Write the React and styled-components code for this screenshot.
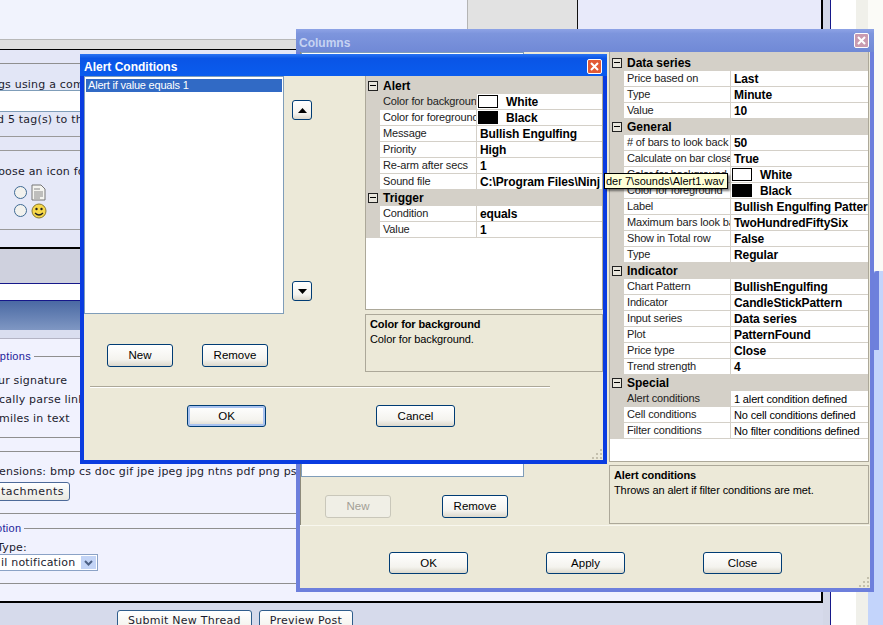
import React from "react"
import styled, { createGlobalStyle } from "styled-components"

const GlobalStyle = createGlobalStyle`
  html, body { margin: 0; padding: 0; overflow: hidden; background: #f1f3fd; }
`

const alertSections = [
  {
    title: "Alert",
    rows: [
      { name: "Color for background", value: "White", swatch: "#fff", selected: true },
      { name: "Color for foreground", value: "Black", swatch: "#000" },
      { name: "Message", value: "Bullish Engulfing" },
      { name: "Priority", value: "High" },
      { name: "Re-arm after secs", value: "1" },
      { name: "Sound file", value: "C:\\Program Files\\Ninj" },
    ],
  },
  {
    title: "Trigger",
    rows: [
      { name: "Condition", value: "equals" },
      { name: "Value", value: "1" },
    ],
  },
]

const columnSections = [
  {
    title: "Data series",
    rows: [
      { name: "Price based on", value: "Last" },
      { name: "Type", value: "Minute" },
      { name: "Value", value: "10" },
    ],
  },
  {
    title: "General",
    rows: [
      { name: "# of bars to look back", value: "50" },
      { name: "Calculate on bar close", value: "True" },
      { name: "Color for background", value: "White", swatch: "#fff" },
      { name: "Color for foreground", value: "Black", swatch: "#000" },
      { name: "Label", value: "Bullish Engulfing Pattern" },
      { name: "Maximum bars look back", value: "TwoHundredFiftySix" },
      { name: "Show in Total row", value: "False" },
      { name: "Type", value: "Regular" },
    ],
  },
  {
    title: "Indicator",
    rows: [
      { name: "Chart Pattern", value: "BullishEngulfing" },
      { name: "Indicator", value: "CandleStickPattern" },
      { name: "Input series", value: "Data series" },
      { name: "Plot", value: "PatternFound" },
      { name: "Price type", value: "Close" },
      { name: "Trend strength", value: "4" },
    ],
  },
  {
    title: "Special",
    rows: [
      { name: "Alert conditions", value: "1 alert condition defined", plain: true, selected: true },
      { name: "Cell conditions", value: "No cell conditions defined", plain: true },
      { name: "Filter conditions", value: "No filter conditions defined", plain: true },
    ],
  },
]

const PropertyGrid = ({ sections, nameWidth, height, leadHeight }) => (
  <GridBox $height={height}>
    {sections.map((section, i) => (
      <div key={section.title}>
        <CategoryRow $height={i === 0 ? leadHeight : 16}>
          <Toggle />
          {section.title}
        </CategoryRow>
        {section.rows.map(row => (
          <PropRow key={row.name} $nameWidth={nameWidth}>
            <PropName $selected={row.selected}>{row.name}</PropName>
            <PropValue $plain={row.plain}>
              {row.swatch && <Swatch $color={row.swatch} />}
              {row.value}
            </PropValue>
          </PropRow>
        ))}
      </div>
    ))}
  </GridBox>
)

const Grip = () => (
  <GripIcon width="12" height="12" viewBox="0 0 12 12">
    {[[9, 1], [5, 5], [9, 5], [1, 9], [5, 9], [9, 9]].map(([x, y]) => (
      <rect key={x + "-" + y} x={x} y={y} width="2" height="2" fill="#c4c0ad" />
    ))}
  </GripIcon>
)

const CloseGlyph = () => (
  <svg width="9" height="9" viewBox="0 0 9 9">
    <path d="M1 1 L8 8 M8 1 L1 8" stroke="#fff" strokeWidth="2" />
  </svg>
)

const Arrow = ({ up }) => (
  <svg width="9" height="5" viewBox="0 0 9 5">
    <path d={up ? "M4.5 0 L9 5 L0 5 Z" : "M0 0 L9 0 L4.5 5 Z"} fill="#000" />
  </svg>
)

const DocIcon = () => (
  <svg width="15" height="17" viewBox="0 0 15 17">
    <path d="M1 1 H10 L14 5 V16 H1 Z" fill="#f4f4f0" stroke="#777" />
    <path d="M3 5 H9 M3 8 H12 M3 10 H12 M3 12 H12 M3 14 H9" stroke="#888" />
  </svg>
)

const SmileIcon = () => (
  <svg width="16" height="16" viewBox="0 0 16 16">
    <circle cx="8" cy="8" r="7" fill="#f7d84a" stroke="#8a7a30" />
    <circle cx="5.5" cy="6" r="1.2" fill="#222" />
    <circle cx="10.5" cy="6" r="1.2" fill="#222" />
    <path d="M4 10 Q8 14 12 10" fill="none" stroke="#222" strokeWidth="1.2" />
  </svg>
)

const App = () => (
  <Page>
    <GlobalStyle />
    <Forum>
      <Sheet>
        <TopRow>
          <TopLeft>
            <TopBand />
          </TopLeft>
          <TopMiddle />
          <TopRight />
        </TopRow>
        <Band $height={14} $line="#8f8f8f" />
        <TextRow $height={26} $pad={14} $indent={-9} $bg="#e2e6f6">ags using a comma to separate them</TextRow>
        <InputRow />
        <TextRow $height={25} $pad={1} $indent={-3} $bg="#e2e6f6" $line="#9a9a9a">d 5 tag(s) to this thread</TextRow>
        <Band $height={14} $line="#9a9a9a" />
        <IconPanel>
          <TextLine $indent={-9}>hoose an icon for your thread</TextLine>
          <IconChoices>
            <Choice>
              <Radio />
              <DocIcon />
            </Choice>
            <Choice>
              <Radio />
              <SmileIcon />
            </Choice>
          </IconChoices>
        </IconPanel>
        <Band $height={17} />
        <Band $height={2} $bg="#000" />
        <Band $height={35} $bg="#cfd1de" $line="#16188a" />
        <Band $height={17} $bg="#fff" $line="#16188a" />
        <HeaderBand />
        <Band $height={9} $bg="#dadeef" $line="#b4b4c4" />
        <OptionsPanel>
          <Legend $indent={-9}>Options</Legend>
          <OptionLine $indent={-2}>ur signature</OptionLine>
          <OptionLine $indent={-1}>cally parse links</OptionLine>
          <OptionLine $indent={-1}>miles in text</OptionLine>
        </OptionsPanel>
        <Band $height={14} $bg="#f1f2fe" $line="#8f8f8f" />
        <AttachPanel>
          <TextLine $indent={-1}>ensions: bmp cs doc gif jpe jpeg jpg ntns pdf png psd</TextLine>
          <AttachButton>tachments</AttachButton>
        </AttachPanel>
        <SubscribePanel>
          <Legend $indent={-4}>otion</Legend>
          <TypeLabel>Type:</TypeLabel>
          <FakeSelect>
            il notification
            <SelectArrow>
              <svg width="9" height="6" viewBox="0 0 9 6">
                <path d="M1 1 L4.5 4.5 L8 1" fill="none" stroke="#4d6185" strokeWidth="2" />
              </svg>
            </SelectArrow>
          </FakeSelect>
        </SubscribePanel>
        <SheetGap />
      </Sheet>
      <SubmitRow>
        <ForumButton>Submit New Thread</ForumButton>
        <ForumButton>Preview Post</ForumButton>
      </SubmitRow>
    </Forum>
    <StripDim />
    <StripWhite />
    <StripPale />
    <Scrollbar>
      <ScrollTrackTop />
      <ScrollThumb />
    </Scrollbar>

    <ColumnsWindow>
      <TitleBar $faded>
        Columns
        <CloseButton $faded>
          <CloseGlyph />
        </CloseButton>
      </TitleBar>
      <ColumnsBody>
        <ColumnsLeft>
          <ColumnsList />
          <ButtonPair $gap={51} $left={24}>
            <SmallButton disabled>New</SmallButton>
            <SmallButton>Remove</SmallButton>
          </ButtonPair>
        </ColumnsLeft>
        <ColumnsRight>
          <PropertyGrid sections={columnSections} nameWidth={107} height={410} leadHeight={19} />
          <HelpBox $height={59}>
            <strong>Alert conditions</strong>
            Throws an alert if filter conditions are met.
          </HelpBox>
        </ColumnsRight>
      </ColumnsBody>
      <ColumnsFooter>
        <WideButton>OK</WideButton>
        <WideButton>Apply</WideButton>
        <WideButton>Close</WideButton>
      </ColumnsFooter>
      <Grip />
    </ColumnsWindow>

    <AlertWindow>
      <TitleBar>
        Alert Conditions
        <CloseButton>
          <CloseGlyph />
        </CloseButton>
      </TitleBar>
      <AlertBody>
        <AlertLeft>
          <AlertList>
            <ListItem>Alert if value equals 1</ListItem>
          </AlertList>
          <ButtonPair $gap={29} $left={23}>
            <SmallButton>New</SmallButton>
            <SmallButton>Remove</SmallButton>
          </ButtonPair>
        </AlertLeft>
        <ArrowColumn>
          <ArrowButton>
            <Arrow up />
          </ArrowButton>
          <ArrowButton>
            <Arrow />
          </ArrowButton>
        </ArrowColumn>
        <AlertRight>
          <PropertyGrid sections={alertSections} nameWidth={97} height={234} leadHeight={18} />
          <HelpBox $height={58}>
            <strong>Color for background</strong>
            Color for background.
          </HelpBox>
        </AlertRight>
      </AlertBody>
      <Separator />
      <AlertFooter>
        <WideButton $default>OK</WideButton>
        <WideButton>Cancel</WideButton>
      </AlertFooter>
      <Grip />
    </AlertWindow>

    <Tooltip>der 7\sounds\Alert1.wav</Tooltip>
  </Page>
)

export default App

const uiFont = `"Liberation Sans", Arial, sans-serif`
const forumFont = `"DejaVu Sans", Verdana, sans-serif`

const Page = styled.div`
  position: relative;
  width: 883px;
  height: 625px;
  overflow: hidden;
  display: flex;
  background: #f1f3fd;
`

const Forum = styled.div`
  width: 823px;
  flex: none;
  display: flex;
  flex-direction: column;
  overflow: hidden;
  font: 11px ${forumFont};
  letter-spacing: 0.2px;
  color: #1c1c2e;
`

const Sheet = styled.div`
  flex: none;
  height: 601px;
  display: flex;
  flex-direction: column;
  overflow: hidden;
  border-right: 2px solid #000;
`

const SheetGap = styled.div`
  flex: 1;
  background: #f1f2fe;
`

const TopRow = styled.div`
  display: flex;
  height: 50px;
  flex: none;
`

const TopLeft = styled.div`
  width: 467px;
  display: flex;
  flex-direction: column;
  justify-content: flex-end;
  background: #f1f3fd;
`

const TopBand = styled.div`
  height: 9px;
  background: #dedede;
  border-top: 1px solid #b8b8b8;
  border-bottom: 1px solid #000;
`

const TopMiddle = styled.div`
  width: 109px;
  background: #e2e2e2;
  border-left: 1px solid #b4b4b4;
  border-right: 1px solid #111;
`

const TopRight = styled.div`
  flex: 1;
  background: #e8eafa;
`

const Band = styled.div`
  flex: none;
  height: ${p => p.$height}px;
  background: ${p => p.$bg || "#e4e7f7"};
  border-bottom: ${p => (p.$line ? `1px solid ${p.$line}` : "none")};
  box-sizing: border-box;
`

const TextRow = styled.div`
  flex: none;
  box-sizing: border-box;
  height: ${p => p.$height}px;
  padding-top: ${p => p.$pad}px;
  text-indent: ${p => p.$indent}px;
  white-space: nowrap;
  overflow: hidden;
  background: ${p => p.$bg};
  border-bottom: ${p => (p.$line ? `1px solid ${p.$line}` : "none")};
  line-height: 14px;
`

const InputRow = styled.div`
  flex: none;
  height: 20px;
  background: #fff;
  border-top: 1px solid #7f9db9;
  border-bottom: 1px solid #7f9db9;
`

const IconPanel = styled.div`
  flex: none;
  box-sizing: border-box;
  height: 79px;
  padding-top: 14px;
  background: #e6e9f8;
  border-bottom: 1px solid #9a9a9a;
`

const TextLine = styled.div`
  margin-left: ${p => p.$indent}px;
  white-space: nowrap;
  line-height: 14px;
`

const IconChoices = styled.div`
  margin: 5px 0 0 14px;
  display: flex;
  flex-direction: column;
  gap: 1px;
`

const Choice = styled.div`
  display: flex;
  align-items: center;
  gap: 4px;
  height: 17px;
`

const Radio = styled.span`
  width: 11px;
  height: 11px;
  border: 1px solid #3f6a94;
  border-radius: 50%;
  background: #f2f2ee;
`

const HeaderBand = styled.div`
  flex: none;
  height: 29px;
  background: linear-gradient(#4a69a3, #7f97c3);
`

const OptionsPanel = styled.div`
  flex: none;
  box-sizing: border-box;
  height: 99px;
  padding-top: 10px;
  background: #f1f2fe;
  border-bottom: 1px solid #8f8f8f;
`

const Legend = styled.div`
  display: flex;
  align-items: center;
  gap: 3px;
  margin-left: ${p => p.$indent}px;
  height: 14px;
  color: #22229a;
  font: 11px ${uiFont};
  letter-spacing: 0.3px;
  &::after {
    content: "";
    flex: 1;
    height: 1px;
    background: #8f8f8f;
  }
`

const OptionLine = styled.div`
  margin-left: ${p => p.$indent}px;
  white-space: nowrap;
  line-height: 19px;
  ${Legend} + & {
    margin-top: 8px;
  }
`

const AttachPanel = styled.div`
  flex: none;
  box-sizing: border-box;
  height: 62px;
  padding-top: 13px;
  background: #f1f2fe;
  border-bottom: 1px solid #8f8f8f;
`

const AttachButton = styled.div`
  box-sizing: border-box;
  width: 87px;
  height: 19px;
  margin: 3px 0 0 -17px;
  padding-left: 17px;
  line-height: 17px;
  letter-spacing: 0.5px;
  border: 1px solid #4d6a99;
  border-radius: 3px;
  background: linear-gradient(#fff, #e9e8e0);
`

const SubscribePanel = styled.div`
  flex: none;
  box-sizing: border-box;
  height: 70px;
  padding-top: 7px;
  background: #f1f2fe;
  border-bottom: 1px solid #8f8f8f;
`

const TypeLabel = styled.div`
  margin: 6px 0 0 -3px;
  line-height: 14px;
`

const FakeSelect = styled.div`
  box-sizing: border-box;
  display: flex;
  align-items: center;
  justify-content: space-between;
  width: 114px;
  height: 17px;
  margin: -1px 0 0 -16px;
  padding-left: 16px;
  background: #fff;
  border: 1px solid #8ba2c6;
  white-space: nowrap;
`

const SelectArrow = styled.span`
  display: flex;
  align-items: center;
  justify-content: center;
  width: 15px;
  height: 13px;
  margin-right: 1px;
  background: #c3d4f6;
`

const SubmitRow = styled.div`
  flex: 1;
  padding: 7px 0 0 117px;
  display: flex;
  gap: 7px;
  background: #d6daeb;
  border-top: 2px solid #000;
`

const ForumButton = styled.div`
  box-sizing: border-box;
  height: 24px;
  padding: 1px 10px 0;
  line-height: 17px;
  letter-spacing: 0.25px;
  color: #1c1c2e;
  border: 1px solid #2f5d8c;
  border-radius: 3px;
  background: linear-gradient(#fff, #f0efe8);
`

const StripDim = styled.div`
  width: 7px;
  flex: none;
  background: #d3d7e7;
  border-right: 1px solid #16188a;
`

const StripWhite = styled.div`
  width: 25px;
  flex: none;
  background: #fff;
`

const StripPale = styled.div`
  width: 12px;
  flex: none;
  background: #f0f0ea;
`

const Scrollbar = styled.div`
  flex: 1;
  display: flex;
  flex-direction: column;
  background: #c3d4fb;
`

const ScrollTrackTop = styled.div`
  height: 271px;
  flex: none;
  background: #fbfbf7;
`

const ScrollThumb = styled.div`
  width: 5px;
  height: 79px;
  margin-left: 6px;
  background: #6d80dc;
  border-radius: 3px 0 0 0;
`

const Window = styled.div`
  position: absolute;
  box-sizing: border-box;
  display: flex;
  flex-direction: column;
  border-style: solid;
  border-width: 0 4px 4px;
  font: 11px ${uiFont};
  letter-spacing: -0.1px;
  color: #000;
  background: #ece9d8;
`

const ColumnsWindow = styled(Window)`
  left: 296px;
  top: 29px;
  width: 578px;
  height: 563px;
  border-color: #6d7fdc;
`

const AlertWindow = styled(Window)`
  left: 80px;
  top: 54px;
  width: 527px;
  height: 410px;
  border-color: #0a3ce0;
`

const TitleBar = styled.div`
  flex: none;
  box-sizing: border-box;
  height: ${p => (p.$faded ? 23 : 22)}px;
  margin: 0 -4px;
  padding: 4px 5px 0 ${p => (p.$faded ? 3 : 4)}px;
  display: flex;
  align-items: center;
  justify-content: space-between;
  font: bold 12px ${uiFont};
  letter-spacing: 0;
  color: ${p => (p.$faded ? "#c6d3f2" : "#fff")};
  background: ${p =>
    p.$faded
      ? "linear-gradient(#8ea3e6, #7d95dd 20%, #7089d6)"
      : "linear-gradient(#2a74f2, #0a55e6 20%, #0a5cee)"};
`

const CloseButton = styled.span`
  width: 13px;
  height: 13px;
  margin-top: ${p => (p.$faded ? -4 : -2)}px;
  display: flex;
  align-items: center;
  justify-content: center;
  border: 1px solid #fff;
  border-radius: 2px;
  background: ${p => (p.$faded ? "#c99bb0" : "#e25a35")};
`

const GripIcon = styled.svg`
  position: absolute;
  right: 0;
  bottom: 0;
`

const GridBox = styled.div`
  box-sizing: border-box;
  height: ${p => p.$height}px;
  background: #fff;
  border: 1px solid #aca899;
  border-top: none;
  overflow: hidden;
`

const CategoryRow = styled.div`
  box-sizing: border-box;
  height: ${p => p.$height}px;
  display: flex;
  align-items: flex-end;
  gap: 5px;
  padding: 0 0 1px 2px;
  background: #d4d0c8;
  font: bold 12px/14px ${uiFont};
  letter-spacing: 0;
`

const Toggle = styled.span`
  position: relative;
  flex: none;
  box-sizing: border-box;
  width: 10px;
  height: 10px;
  margin-bottom: 2px;
  border: 1px solid #222;
  background: #e8e5dc;
  &::after {
    content: "";
    position: absolute;
    left: 1px;
    right: 1px;
    top: 3px;
    height: 1px;
    background: #000;
  }
`

const PropRow = styled.div`
  height: 16px;
  box-sizing: border-box;
  display: grid;
  grid-template-columns: 14px ${p => p.$nameWidth}px 1fr;
  background: #fff;
  border-bottom: 1px solid #d4d0c8;
  &::before {
    content: "";
    background: #d4d0c8;
    margin-bottom: -1px;
  }
`

const PropName = styled.div`
  padding-left: 3px;
  line-height: 15px;
  letter-spacing: -0.15px;
  white-space: nowrap;
  overflow: hidden;
  border-right: 1px solid #d4d0c8;
  color: #222;
  background: ${p => (p.$selected ? "#d4d0c8" : "#fff")};
`

const PropValue = styled.div`
  display: flex;
  align-items: center;
  gap: 8px;
  padding-left: 3px;
  white-space: nowrap;
  overflow: hidden;
  font: ${p => (p.$plain ? "normal 11px" : "bold 12px")} ${uiFont};
  letter-spacing: ${p => (p.$plain ? -0.15 : -0.1)}px;
`

const Swatch = styled.span`
  flex: none;
  box-sizing: border-box;
  width: 20px;
  height: 13px;
  margin-left: -2px;
  border: 1px solid #000;
  background: ${p => p.$color};
`

const HelpBox = styled.div`
  box-sizing: border-box;
  height: ${p => p.$height}px;
  padding: 2px 4px;
  display: flex;
  flex-direction: column;
  line-height: 15px;
  border: 1px solid #aca899;
  strong {
    font-size: 11px;
  }
`

const XpButton = styled.button`
  box-sizing: border-box;
  padding: 0;
  font: 11.5px ${uiFont};
  color: #000;
  border: 1px solid #003c74;
  border-radius: 3px;
  background: linear-gradient(#fff, #f4f3ee 70%, #dcd8cc);
  &:disabled {
    color: #a3a096;
    border-color: #c9c7ba;
    background: #f0efe6;
  }
`

const SmallButton = styled(XpButton)`
  width: 66px;
  height: 23px;
  padding-bottom: 2px;
`

const WideButton = styled(XpButton)`
  width: 79px;
  height: 22px;
  box-shadow: ${p => (p.$default ? "inset 0 0 0 2px #a9c3f0" : "none")};
`

const ArrowButton = styled(XpButton)`
  width: 20px;
  height: 20px;
  display: flex;
  align-items: center;
  justify-content: center;
`

const ButtonPair = styled.div`
  display: flex;
  gap: ${p => p.$gap}px;
  margin-left: ${p => p.$left}px;
`

const ColumnsBody = styled.div`
  flex: none;
  height: 473px;
  display: grid;
  grid-template-columns: 309px 260px;
  border-bottom: 1px solid #f8f7ee;
`

const ColumnsLeft = styled.div`
  display: flex;
  flex-direction: column;
  gap: 18px;
  border-left: 1px solid #8d8a7b;
`

const ColumnsList = styled.div`
  box-sizing: border-box;
  width: 223px;
  height: 425px;
  background: #fff;
  border: 1px solid #7f9db9;
`

const ColumnsRight = styled.div`
  display: flex;
  flex-direction: column;
  gap: 3px;
`

const ColumnsFooter = styled.div`
  flex: 1;
  padding: 26px 0 0 89px;
  display: flex;
  align-items: flex-start;
  gap: 78px;
`

const AlertBody = styled.div`
  flex: none;
  height: 296px;
  display: grid;
  grid-template-columns: 200px 81px 238px;
`

const AlertLeft = styled.div`
  display: flex;
  flex-direction: column;
  gap: 30px;
`

const AlertList = styled.div`
  box-sizing: border-box;
  height: 238px;
  padding: 2px 1px;
  background: #fff;
  border: 1px solid #7f9db9;
`

const ListItem = styled.div`
  height: 13px;
  line-height: 13px;
  padding-left: 2px;
  letter-spacing: -0.2px;
  color: #fff;
  background: #316ac5;
`

const ArrowColumn = styled.div`
  box-sizing: border-box;
  height: 225px;
  padding: 24px 0 0 8px;
  display: flex;
  flex-direction: column;
  justify-content: space-between;
`

const AlertRight = styled.div`
  display: flex;
  flex-direction: column;
  gap: 4px;
`

const Separator = styled.div`
  flex: none;
  width: 460px;
  height: 1px;
  margin: 14px 0 0 6px;
  background: #aca899;
  box-shadow: 0 1px 0 #fff;
`

const AlertFooter = styled.div`
  display: flex;
  gap: 110px;
  margin: 18px 0 0 103px;
`

const Tooltip = styled.div`
  position: absolute;
  left: 604px;
  top: 173px;
  height: 14px;
  padding: 0 3px 0 1px;
  font: 11px/15px ${uiFont};
  white-space: nowrap;
  color: #000;
  background: #ffffd8;
  border: 1px solid #000;
  box-shadow: 2px 2px 2px rgba(0, 0, 0, 0.5);
`
